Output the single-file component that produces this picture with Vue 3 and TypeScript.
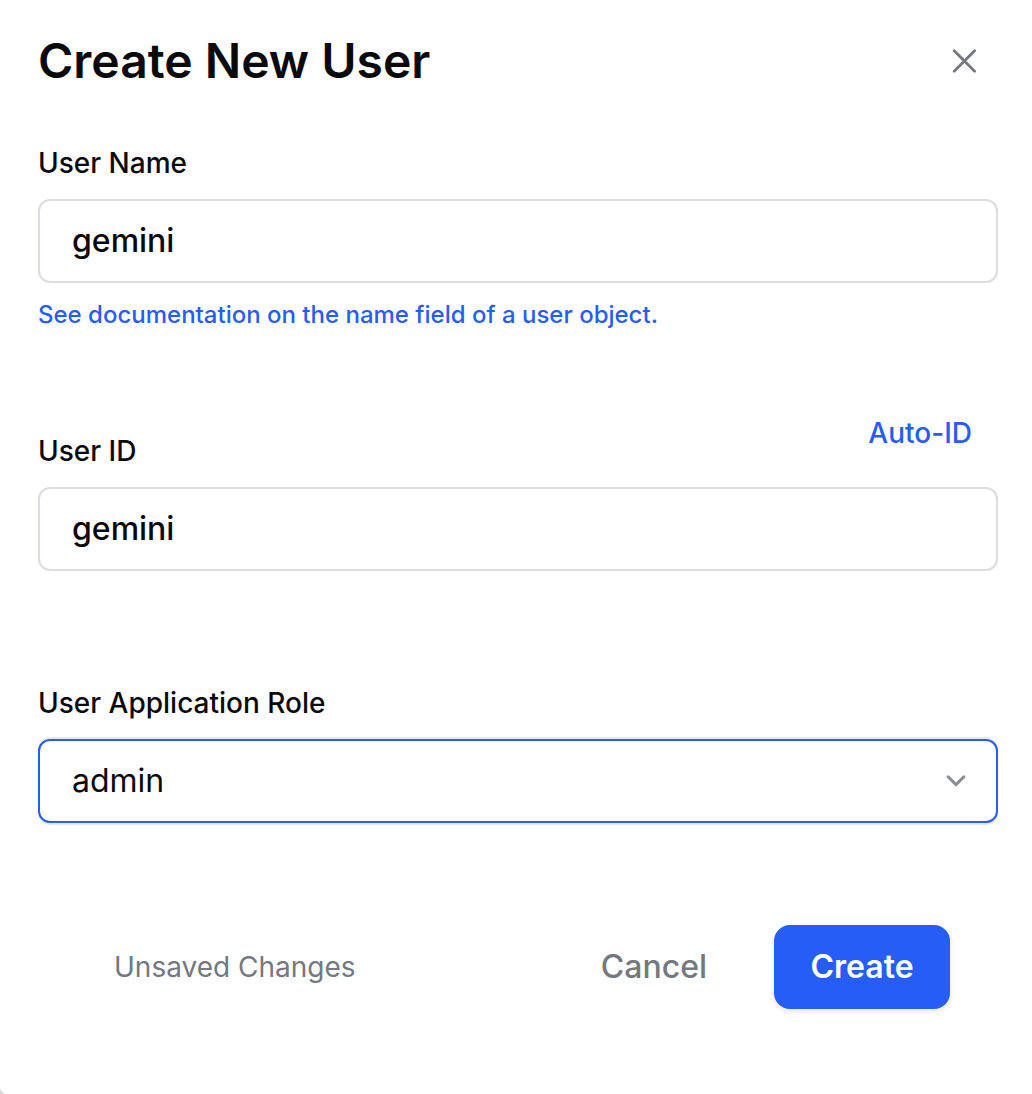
<script setup lang="ts">
import { ref } from 'vue'

const userName = ref<string>('gemini')
const userId = ref<string>('gemini')
const role = ref<string>('admin')
const roles: string[] = ['admin', 'editor', 'viewer']
</script>

<template>
  <main class="dialog" role="dialog" aria-labelledby="title">
    <header class="header">
      <h1 id="title">Create New User</h1>
      <button class="close" type="button" aria-label="Close">
        <svg width="24" height="24" viewBox="0 0 24 24" fill="none" stroke="currentColor" stroke-width="2.8" stroke-linecap="round">
          <path d="M2.2 1.8 22.6 22.2M22.6 1.8 2.2 22.2" />
        </svg>
      </button>
    </header>
    <form class="form" @submit.prevent>
      <div class="field name-field">
        <label for="user-name">User Name</label>
        <input id="user-name" v-model="userName" class="control" type="text" />
        <a class="doc" href="#">See documentation on the name field of a user object.</a>
      </div>
      <div class="field id-field">
        <div class="label-row">
          <label for="user-id">User ID</label>
          <button class="auto" type="button">Auto-ID</button>
        </div>
        <input id="user-id" v-model="userId" class="control" type="text" />
      </div>
      <div class="field">
        <label for="role">User Application Role</label>
        <div class="select-wrap">
          <select id="role" v-model="role" class="control select">
            <option v-for="r in roles" :key="r" :value="r">{{ r }}</option>
          </select>
          <svg class="chevron" width="20" height="12" viewBox="0 0 20 12" fill="none" stroke="currentColor" stroke-width="3" stroke-linecap="round" stroke-linejoin="round">
            <path d="M2.2 1.9 10 9.6 17.8 1.9" />
          </svg>
        </div>
      </div>
      <footer class="footer">
        <span class="status">Unsaved Changes</span>
        <button class="btn cancel" type="button">Cancel</button>
        <button class="btn create" type="submit">Create</button>
      </footer>
    </form>
  </main>
</template>

<style>
body {
  background: #d8d8da;
}
</style>

<style scoped>
.dialog {
  box-sizing: border-box;
  min-height: 100vh;
  padding: 32px 34px 84px 38px;
  border-bottom-left-radius: 7px;
  background: #fff;
  font-family: Inter, "Liberation Sans", sans-serif;
  color: #09090b;
}
.dialog * {
  box-sizing: border-box;
}
.header {
  display: flex;
  align-items: center;
  justify-content: space-between;
  margin-bottom: 56px;
}
h1 {
  margin: 0;
  font-size: 48px;
  line-height: 58px;
  font-weight: 600;
}
button {
  border: 0;
  padding: 0;
  background: none;
  font-family: inherit;
  cursor: pointer;
}
.close {
  display: flex;
  margin-right: 22px;
  color: #757781;
}
.field {
  display: flex;
  flex-direction: column;
}
.name-field {
  margin-bottom: 86px;
}
.id-field {
  margin-bottom: 115px;
}
label {
  font-size: 28px;
  line-height: 34px;
  font-weight: 500;
  margin-bottom: 19px;
}
.label-row {
  display: flex;
  justify-content: space-between;
  align-items: flex-end;
}
.auto {
  margin: 0 26px 37px 0;
  color: #265df5;
  font-size: 28px;
  line-height: 34px;
  font-weight: 500;
}
.control {
  width: 100%;
  height: 84px;
  margin: 0;
  padding: 0 32px 2px;
  border: 2px solid #dcdce1;
  border-radius: 12px;
  background: #fff;
  color: #09090b;
  font-family: inherit;
  font-size: 32px;
  font-weight: 500;
  outline: none;
}
.doc {
  margin-top: 17px;
  align-self: flex-start;
  color: #265df5;
  font-size: 24px;
  line-height: 30px;
  font-weight: 500;
  text-decoration: none;
}
.select-wrap {
  position: relative;
}
.select {
  display: block;
  appearance: none;
  border-color: #265df5;
  font-weight: 400;
  box-shadow: 0 -2px #e9e9e9, 0 2px #e9e9e9;
}
.chevron {
  position: absolute;
  right: 32px;
  top: 36px;
  color: #8a8f94;
  pointer-events: none;
}
.footer {
  display: flex;
  align-items: center;
  margin-top: 102px;
  padding: 0 48px 0 76px;
}
.status {
  margin-right: auto;
  color: #757781;
  font-size: 28px;
}
.btn {
  height: 84px;
  padding-bottom: 2px;
  font-size: 32px;
  font-weight: 500;
}
.cancel {
  margin-right: 67px;
  color: #757781;
}
.create {
  width: 176px;
  border-radius: 16px;
  background: #265df5;
  color: #fff;
  font-weight: 600;
  box-shadow: 0 2px 6px rgb(0 0 0 / 10%);
}
</style>
